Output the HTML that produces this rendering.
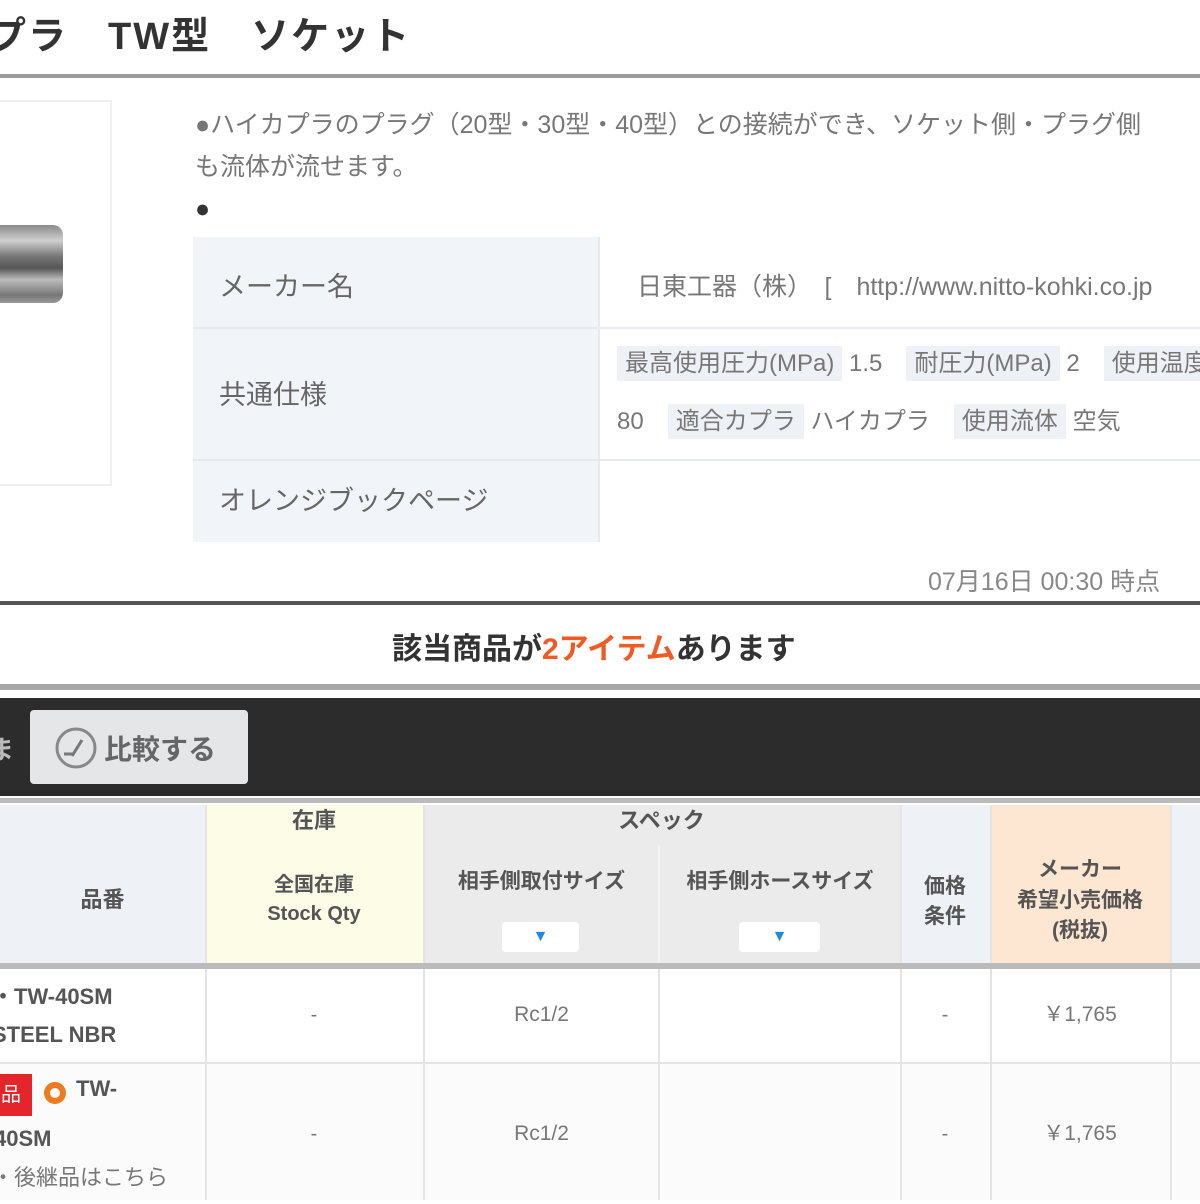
<!DOCTYPE html>
<html><head><meta charset="utf-8"><style>
*{margin:0;padding:0;box-sizing:border-box}
body{width:1200px;height:1200px;overflow:hidden;background:#fff;font-family:"Liberation Sans","Noto Sans CJK JP",sans-serif;color:#555;position:relative}
.a{position:absolute;white-space:nowrap}
.c{position:absolute;display:flex;align-items:center;justify-content:center;text-align:center;line-height:1.45}
</style></head><body>
<div class="a" style="left:-52px;top:5px;font-size:38px;font-weight:bold;color:#333;letter-spacing:2px">カプラ　TW型　ソケット</div>
<div class="a" style="left:0;top:74px;width:1200px;height:4px;background:#9a9a9a"></div>

<div class="a" style="left:-10px;top:100px;width:122px;height:386px;border:2px solid #f0f0f0"></div>
<div class="a" style="left:-20px;top:225px;width:83px;height:78px;border-radius:10px;background:linear-gradient(#8a8a8a,#cfcfcf 20%,#777 40%,#555 55%,#bbb 70%,#777 90%,#999)"></div>

<div class="a" style="left:195px;top:104px;font-size:25px;line-height:42px;color:#777">●ハイカプラのプラグ（20型・30型・40型）との接続ができ、ソケット側・プラグ側<br>も流体が流せます。<br><span style="color:#333">●</span></div>

<div class="a" style="left:193px;top:237px;width:1010px;height:305px;background:#fff">
 <div class="a" style="left:0;top:0;width:405px;height:305px;background:#f1f4f8"></div>
 <div class="a" style="left:0;top:90px;width:1010px;height:2px;background:#e6e9ee"></div>
 <div class="a" style="left:0;top:222px;width:1010px;height:2px;background:#e6e9ee"></div>
 <div class="a" style="left:405px;top:0;width:2px;height:305px;background:#e6e9ee"></div>
 <div class="a" style="left:26px;top:28px;font-size:27px;color:#666">メーカー名</div>
 <div class="a" style="left:26px;top:136px;font-size:27px;color:#666">共通仕様</div>
 <div class="a" style="left:26px;top:242px;font-size:27px;color:#666">オレンジブックページ</div>
 <div class="a" style="left:444px;top:30px;font-size:25px;color:#777">日東工器（株）　[　http://www.nitto-kohki.co.jp</div>
 <div class="a" style="left:424px;top:106px;font-size:24px;color:#777"><span style="background:#eef1f5;padding:4px 8px">最高使用圧力(MPa)</span> 1.5　<span style="background:#eef1f5;padding:4px 8px">耐圧力(MPa)</span> 2　<span style="background:#eef1f5;padding:4px 8px">使用温度</span></div>
 <div class="a" style="left:424px;top:164px;font-size:24px;color:#777">80　<span style="background:#eef1f5;padding:4px 8px">適合カプラ</span> ハイカプラ　<span style="background:#eef1f5;padding:4px 8px">使用流体</span> 空気</div>
</div>

<div class="a" style="left:928px;top:562px;font-size:25px;color:#888">07月16日 00:30 時点</div>
<div class="a" style="left:0;top:601px;width:1200px;height:4px;background:#555"></div>
<div class="a" style="left:392px;top:624px;font-size:30px;font-weight:bold;color:#333">該当商品が<span style="color:#f05a24">2アイテム</span>あります</div>
<div class="a" style="left:0;top:684px;width:1200px;height:6px;background:#a8a8a8"></div>

<div class="a" style="left:0;top:698px;width:1200px;height:98px;background:#2c2c2c"></div>
<div class="a" style="top:730px;font-size:26px;color:#bbb;font-weight:bold;left:-12px">ま</div>
<div class="a" style="left:30px;top:710px;width:218px;height:74px;background:#e4e6e8;border-radius:4px"></div>
<svg class="a" style="left:54px;top:726px" width="44" height="44" viewBox="0 0 44 44"><circle cx="22" cy="22" r="19" fill="none" stroke="#888" stroke-width="3"/><path d="M10 28 L20 28 M28 14 L18 30" stroke="#777" stroke-width="3" fill="none"/></svg>
<div class="a" style="left:104px;top:728px;font-size:28px;font-weight:bold;color:#666">比較する</div>
<div class="a" style="left:0;top:798px;width:1200px;height:5px;background:#bbb"></div>

<div class="a" style="left:0;top:805px;width:205px;height:160px;background:#eef2f7"></div>
<div class="a" style="left:205px;top:805px;width:218px;height:160px;background:#fdfce6"></div>
<div class="a" style="left:423px;top:805px;width:477px;height:160px;background:#ebebeb"></div>
<div class="a" style="left:900px;top:805px;width:90px;height:160px;background:#eef2f7"></div>
<div class="a" style="left:990px;top:805px;width:180px;height:160px;background:#fde7d3"></div>
<div class="a" style="left:1170px;top:805px;width:30px;height:160px;background:#eef2f7"></div>
<div class="a" style="left:658px;top:845px;width:2px;height:120px;background:#f4f4f4"></div>
<div class="a" style="left:205px;top:805px;width:2px;height:395px;background:#e4e4e4"></div>
<div class="a" style="left:423px;top:805px;width:2px;height:395px;background:#e4e4e4"></div>
<div class="a" style="left:658px;top:968px;width:2px;height:232px;background:#e4e4e4"></div>
<div class="a" style="left:900px;top:805px;width:2px;height:395px;background:#e4e4e4"></div>
<div class="a" style="left:990px;top:805px;width:2px;height:395px;background:#e4e4e4"></div>
<div class="a" style="left:1170px;top:805px;width:2px;height:395px;background:#e4e4e4"></div>

<div class="c" style="left:0;top:820px;width:205px;height:160px;font-size:22px;font-weight:bold;color:#555">品番</div>
<div class="c" style="left:205px;top:803px;width:218px;height:36px;font-size:22px;font-weight:bold;color:#555">在庫</div>
<div class="c" style="left:205px;top:862px;width:218px;height:76px;font-size:20px;font-weight:bold;color:#555">全国在庫<br>Stock Qty</div>
<div class="c" style="left:423px;top:803px;width:477px;height:36px;font-size:22px;font-weight:bold;color:#555">スペック</div>
<div class="c" style="left:423px;top:864px;width:237px;height:36px;font-size:21px;font-weight:bold;color:#555">相手側取付サイズ</div>
<div class="c" style="left:660px;top:864px;width:240px;height:36px;font-size:21px;font-weight:bold;color:#555">相手側ホースサイズ</div>
<div class="c" style="left:502px;top:922px;width:77px;height:30px;background:#fff;border-radius:4px;color:#1e88e5;font-size:16px">▼</div>
<div class="c" style="left:739px;top:922px;width:81px;height:30px;background:#fff;border-radius:4px;color:#1e88e5;font-size:16px">▼</div>
<div class="c" style="left:900px;top:862px;width:90px;height:80px;font-size:21px;font-weight:bold;color:#555">価格<br>条件</div>
<div class="c" style="left:990px;top:845px;width:180px;height:112px;font-size:21px;font-weight:bold;color:#555">メーカー<br>希望小売価格<br>(税抜)</div>

<div class="a" style="left:0;top:963px;width:1200px;height:6px;background:#bbb"></div>
<div class="a" style="left:0;top:1062px;width:1200px;height:2px;background:#e4e4e4"></div>
<div class="a" style="left:0;top:1064px;width:1200px;height:136px;background:#fbfbfb;z-index:-1"></div>

<div class="a" style="left:-8px;top:978px;font-size:22px;font-weight:bold;color:#555;line-height:38px">・TW-40SM<br>STEEL NBR</div>
<div class="c" style="left:205px;top:968px;width:218px;height:94px;font-size:20px;color:#777">-</div>
<div class="c" style="left:423px;top:968px;width:237px;height:94px;font-size:21px;color:#777">Rc1/2</div>
<div class="c" style="left:900px;top:968px;width:90px;height:94px;font-size:20px;color:#777">-</div>
<div class="c" style="left:990px;top:968px;width:180px;height:94px;font-size:21px;color:#777">￥1,765</div>

<div class="a" style="left:-10px;top:1074px;width:42px;height:42px;background:#e4262c;color:#fff;font-size:20px;text-align:center;line-height:42px">品</div>
<div class="a" style="left:44px;top:1082px;width:22px;height:22px;border:6px solid #f07a20;border-radius:50%"></div>
<div class="a" style="left:76px;top:1076px;font-size:22px;font-weight:bold;color:#555">TW-</div>
<div class="a" style="left:-6px;top:1126px;font-size:22px;font-weight:bold;color:#555">40SM</div>
<div class="a" style="left:-8px;top:1160px;font-size:22px;color:#777">・後継品はこちら</div>
<div class="c" style="left:205px;top:1064px;width:218px;height:140px;font-size:20px;color:#777">-</div>
<div class="c" style="left:423px;top:1064px;width:237px;height:140px;font-size:21px;color:#777">Rc1/2</div>
<div class="c" style="left:900px;top:1064px;width:90px;height:140px;font-size:20px;color:#777">-</div>
<div class="c" style="left:990px;top:1064px;width:180px;height:140px;font-size:21px;color:#777">￥1,765</div>
</body></html>
